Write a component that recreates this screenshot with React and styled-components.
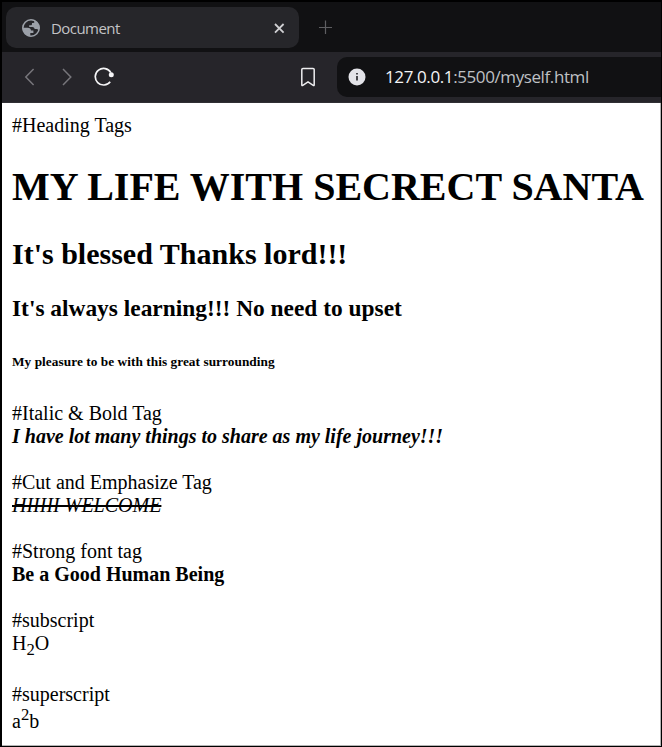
import React from "react";
import styled, { createGlobalStyle } from "styled-components";

const GlobalStyle = createGlobalStyle`
  html, body { margin: 0; padding: 0; background: #000; }
  * { box-sizing: border-box; }
`;

const Window = styled.div`
  width: 662px;
  height: 747px;
  display: flex;
  flex-direction: column;
  background: #000;
  padding: 2px 1px 1px 2px;
  overflow: hidden;
`;

const TabStrip = styled.div`
  height: 50px;
  flex: none;
  display: flex;
  align-items: flex-start;
  padding: 5px 0 0 4px;
  background: #111113;
`;

const Tab = styled.div`
  width: 293px;
  height: 41px;
  display: flex;
  align-items: center;
  padding: 0 13px 0 15px;
  border-radius: 10px;
  background: #26262a;
`;

const TabTitle = styled.span`
  flex: 1;
  margin-left: 10px;
  font: 15px/20px "Open Sans", "Noto Sans", sans-serif;
  letter-spacing: -0.55px;
  color: #c3c3c6;
`;

const Icon = styled.svg`
  display: block;
  flex: none;
  fill: none;
  margin: ${(p) => p.$margin || "0"};
`;

const Toolbar = styled.div`
  height: 51px;
  flex: none;
  display: flex;
  align-items: flex-start;
  background: #26252a;
  border-bottom: 1px solid #302f34;
`;

const AddressBar = styled.div`
  flex: 1;
  height: 40px;
  margin: 5px 0 0 21px;
  padding-left: 11px;
  display: flex;
  align-items: center;
  border-radius: 10px 0 0 10px;
  background: #111113;
`;

const Url = styled.span`
  margin-left: 19px;
  font: 17px/24px "Open Sans", "Noto Sans", sans-serif;
  letter-spacing: -0.4px;
  white-space: nowrap;
  color: #bfc0c4;
`;

const Host = styled.span`
  letter-spacing: -0.4px;
  color: #f4f4f6;
`;

const Page = styled.main`
  flex: 1;
  min-height: 0;
  padding: 11px 0 0 10px;
  background: #fff;
  border-right: 1px solid #b4b4b4;
  border-bottom: 1px solid #b4b4b4;
  font-family: "Liberation Serif", "Times New Roman", serif;
  font-size: 20px;
  line-height: 23px;
  color: #000;
  white-space: nowrap;
`;

const Line = styled.div`
  height: 23px;
`;

const Heading = styled.div`
  font-weight: bold;
  font-size: ${(p) => p.$size}px;
  line-height: ${(p) => p.$height}px;
  height: ${(p) => p.$height}px;
  margin: ${(p) => p.$gap}px 0 0;
  letter-spacing: ${(p) => p.$spacing || 0}px;
`;

const Section = styled.section`
  margin-top: ${(p) => p.$gap}px;
`;

const BoldItalic = styled.i`
  font-weight: bold;
`;

const FormulaLine = styled.div`
  height: 28px;
  line-height: ${(p) => p.$leading || 23}px;

  sub, sup {
    font-size: 16.67px;
  }
`;

export default function App() {
  return (
    <>
      <GlobalStyle />
      <Window>
        <TabStrip>
          <Tab>
            <Icon width="20" height="20" viewBox="0 0 20 20">
              <circle cx="10" cy="10" r="8.2" stroke="#9ba0a8" strokeWidth="1.6" />
              <path
                d="M10.8 1.5 C15 1.8 18.6 5.5 18.6 10 L17.6 12 C16.8 11.3 16 11 14.7 11 L13.6 10.9 C13.4 9.8 12.5 9.1 11.4 9.1 H8.2 V7.2 H9.7 C10.5 7.2 11 6.7 11 5.9 V4.9 H12.3 C13.3 4.9 13.7 4 13.2 3.2 Z"
                fill="#9ba0a8"
              />
              <path
                d="M1.6 9.7 H6.6 C8.7 9.7 10 10.8 10 12.6 H12.4 V14.9 H9.3 V18.4 C5 18.3 1.6 14.3 1.6 9.7 Z"
                fill="#9ba0a8"
              />
            </Icon>
            <TabTitle>Document</TabTitle>
            <Icon width="14" height="14" viewBox="0 0 14 14">
              <path d="M3 3 L11.6 11.6 M11.6 3 L3 11.6" stroke="#d0d0d3" strokeWidth="1.8" />
            </Icon>
          </Tab>
          <Icon $margin="13px 0 0 19px" width="14" height="14" viewBox="0 0 14 14">
            <path d="M7.5 0.5 V14 M1 7.5 H14" stroke="#5e5e61" strokeWidth="1.2" />
          </Icon>
        </TabStrip>
        <Toolbar>
          <Icon $margin="15px 0 0 22px" width="12" height="20" viewBox="0 0 12 20">
            <path d="M9.6 2 L1.8 10 L9.6 18" stroke="#77767b" strokeWidth="1.5" />
          </Icon>
          <Icon $margin="15px 0 0 24px" width="12" height="20" viewBox="0 0 12 20">
            <path d="M3 2 L10.8 10 L3 18" stroke="#77767b" strokeWidth="1.5" />
          </Icon>
          <Icon $margin="15px 0 0 21px" width="22" height="20" viewBox="0 0 22 20">
            <path d="M17.8 5.6 A8.3 8.3 0 1 0 17.2 14.7" stroke="#f5f5f7" strokeWidth="1.7" />
            <circle cx="18.3" cy="7.8" r="2.5" fill="#f5f5f7" />
          </Icon>
          <Icon $margin="15px 0 0 185px" width="16" height="20" viewBox="0 0 16 20">
            <path
              d="M3 1.4 H13 Q14.2 1.4 14.2 2.6 V17.8 Q14.2 19 13.2 18.3 L8 14.9 L2.8 18.3 Q1.8 19 1.8 17.8 V2.6 Q1.8 1.4 3 1.4 Z"
              stroke="#eeeef0"
              strokeWidth="1.5"
            />
          </Icon>
          <AddressBar>
            <Icon width="18" height="18" viewBox="0 0 18 18">
              <circle cx="9" cy="9" r="8.5" fill="#e3e3e8" />
              <path d="M9 8 V12.5 M9 5 V6.5" stroke="#202024" strokeWidth="1.6" />
            </Icon>
            <Url>
              <Host>127.0.0.1</Host>:5500/myself.html
            </Url>
          </AddressBar>
        </Toolbar>
        <Page>
          <Line>#Heading Tags</Line>
          <Heading as="h1" $size={40} $height={46} $gap={27}>MY LIFE WITH SECRECT SANTA</Heading>
          <Heading as="h2" $size={30} $height={34} $gap={27}>It's blessed Thanks lord!!!</Heading>
          <Heading as="h3" $size={23.4} $height={26} $gap={24}>It's always learning!!! No need to upset</Heading>
          <Heading as="h5" $size={13.3} $height={16} $gap={33} $spacing={0.05}>My pleasure to be with this great surrounding</Heading>
          <Section $gap={32}>
            <Line>#Italic &amp; Bold Tag</Line>
            <Line><BoldItalic>I have lot many things to share as my life journey!!!</BoldItalic></Line>
          </Section>
          <Section $gap={23}>
            <Line>#Cut and Emphasize Tag</Line>
            <Line><s><em>HIIIII WELCOME</em></s></Line>
          </Section>
          <Section $gap={23}>
            <Line>#Strong font tag</Line>
            <Line><strong>Be a Good Human Being</strong></Line>
          </Section>
          <Section $gap={23}>
            <Line>#subscript</Line>
            <FormulaLine>H<sub>2</sub>O</FormulaLine>
          </Section>
          <Section $gap={23}>
            <Line>#superscript</Line>
            <FormulaLine $leading={18}>a<sup>2</sup>b</FormulaLine>
          </Section>
        </Page>
      </Window>
    </>
  );
}
